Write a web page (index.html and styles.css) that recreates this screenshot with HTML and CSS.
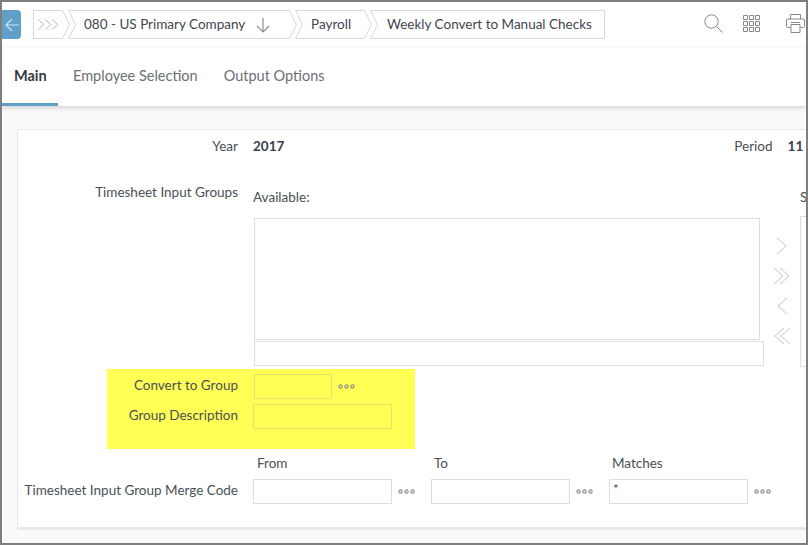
FILE: index.html
```html
<!DOCTYPE html>
<html lang="en">
<head>
  <meta charset="UTF-8">
  <title>Weekly Convert to Manual Checks</title>
  <link rel="stylesheet" href="styles.css">
</head>
<body>
  <svg class="defs" width="0" height="0">
    <symbol id="notch" viewBox="0 0 8 29"><path d="M8 .5H.7L7.500 14.500L.7 28.500H8"/></symbol>
    <symbol id="tip" viewBox="0 0 9 29"><path d="M0 .5H1.500L8.400 14.500L1.500 28.500H0"/></symbol>
    <symbol id="dots" viewBox="0 0 17 5">
      <circle cx="2.500" cy="2.500" r="1.600"/><circle cx="8.500" cy="2.500" r="1.600"/><circle cx="14.500" cy="2.500" r="1.600"/>
    </symbol>
  </svg>

  <div class="frame">
    <header class="topbar">
      <button class="back">
        <svg width="16" height="16" viewBox="0 0 16 16"><path d="M15 8H2M8 2L2 8l6 6"/></svg>
      </button>
      <nav class="crumbs">
        <div class="crumb crumb-first">
          <span class="crumb-body">
            <svg width="20" height="11" viewBox="0 0 20 11"><path d="M.5.5l5 5-5 5M7.500.5l5 5-5 5M14.500.5l5 5-5 5"/></svg>
          </span>
          <svg class="tip"><use href="#tip"/></svg>
        </div>
        <div class="crumb">
          <svg class="notch"><use href="#notch"/></svg>
          <span class="crumb-body crumb-company"><span>080 - US Primary Company</span><svg class="down" width="14" height="16" viewBox="0 0 14 16"><path d="M7 1v14M1 9l6 6 6-6"/></svg></span>
          <svg class="tip"><use href="#tip"/></svg>
        </div>
        <div class="crumb">
          <svg class="notch"><use href="#notch"/></svg>
          <span class="crumb-body crumb-payroll">Payroll</span>
          <svg class="tip"><use href="#tip"/></svg>
        </div>
        <div class="crumb crumb-last">
          <svg class="notch"><use href="#notch"/></svg>
          <span class="crumb-body crumb-title">Weekly Convert to Manual Checks</span>
        </div>
      </nav>
      <div class="tools">
        <svg class="tool-search" width="19" height="19" viewBox="0 0 19 19"><circle cx="7.500" cy="7.500" r="6.700"/><path d="M12.500 12.500l6 6"/></svg>
        <svg class="tool-grid" width="17" height="17" viewBox="0 0 17 17">
          <path d="M.5.5h4v4h-4zM6.500.5h4v4h-4zM12.500.5h4v4h-4zM.5 6.500h4v4h-4zM6.500 6.500h4v4h-4zM12.500 6.500h4v4h-4zM.5 12.500h4v4h-4zM6.500 12.500h4v4h-4zM12.500 12.500h4v4h-4z"/>
        </svg>
        <svg class="tool-print" width="19" height="19" viewBox="0 0 19 19"><path d="M4.500 5V.5h10V5M4.500 13.500h-3a1 1 0 0 1-1-1V6a1 1 0 0 1 1-1h16a1 1 0 0 1 1 1v6.500a1 1 0 0 1-1 1h-3M5 8.500h9M5 10.500h9V18.500H5z"/></svg>
      </div>
    </header>

    <div class="tabs">
      <a class="tab tab-active">Main</a>
      <a class="tab">Employee Selection</a>
      <a class="tab">Output Options</a>
    </div>

    <main class="content">
      <section class="panel">
        <div class="row row-year">
          <label class="label">Year</label>
          <strong class="value">2017</strong>
          <label class="period-label">Period</label>
          <strong class="value">11</strong>
        </div>

        <div class="row row-groups">
          <label class="label">Timesheet Input Groups</label>
          <div class="picker">
            <div class="picker-head">
              <span>Available:</span>
            </div>
            <div class="picker-body">
              <div class="picker-left">
                <div class="listbox"></div>
                <input class="input input-filter" type="text">
              </div>
              <div class="movers">
                <svg width="12" height="18" viewBox="0 0 12 18"><path d="M1 1l9 8-9 8"/></svg>
                <svg width="18" height="18" viewBox="0 0 18 18"><path d="M1 1l9 8-9 8M7 1l9 8-9 8"/></svg>
                <svg width="12" height="18" viewBox="0 0 12 18"><path d="M11 1L2 9l9 8"/></svg>
                <svg width="18" height="18" viewBox="0 0 18 18"><path d="M11 1L2 9l9 8M17 1L8 9l9 8"/></svg>
              </div>
              <div class="selected-col">
                <span class="selected-head">S</span>
                <div class="listbox listbox-selected"></div>
              </div>
            </div>
          </div>
        </div>

        <div class="highlight">
          <div class="row row-convert">
            <label class="label label-short">Convert to Group</label>
            <input class="input input-small" type="text">
            <svg class="dots"><use href="#dots"/></svg>
          </div>
          <div class="row row-desc">
            <label class="label label-short">Group Description</label>
            <input class="input" type="text">
          </div>
        </div>

        <div class="range-head">
          <span class="col-from">From</span>
          <span class="col-to">To</span>
          <span>Matches</span>
        </div>
        <div class="row row-merge">
          <label class="label">Timesheet Input Group Merge Code</label>
          <input class="input" type="text">
          <svg class="dots"><use href="#dots"/></svg>
          <input class="input" type="text">
          <svg class="dots"><use href="#dots"/></svg>
          <input class="input input-star" type="text" value="*">
          <svg class="dots"><use href="#dots"/></svg>
        </div>
      </section>
    </main>
  </div>
</body>
</html>
```

FILE: styles.css
```css
* {
  box-sizing: border-box;
}

html, body {
  margin: 0;
  height: 100%;
}

body {
  font-family: "Lato", "Open Sans", sans-serif;
  font-size: 13.5px;
  color: #4a4f55;
  overflow: hidden;
}

.defs {
  position: absolute;
}

.frame {
  width: 808px;
  height: 545px;
  border: 2px solid #7f7f7f;
  background: #fafafa;
  overflow: hidden;
  display: flex;
  flex-direction: column;
}

/* top bar */
.topbar {
  height: 46px;
  padding-top: 8px;
  background: #fff;
  display: flex;
  align-items: flex-start;
  flex: none;
}

.back {
  width: 19px;
  height: 29px;
  padding: 0;
  border: 0;
  border-radius: 0 4px 4px 0;
  background: #609fc8;
  display: flex;
  align-items: center;
  justify-content: center;
}

.back svg {
  fill: none;
  stroke: #cfe3f0;
  stroke-width: 1.2;
}

.crumbs {
  display: flex;
  margin-left: 12px;
  color: #3f4650;
}

.crumb {
  display: flex;
  height: 29px;
  margin-right: -2px;
}

.crumb > svg {
  height: 29px;
  fill: none;
  stroke: #d8d8d8;
  flex: none;
}

.notch {
  width: 8px;
}

.tip {
  width: 9px;
}

.crumb-body {
  display: flex;
  align-items: center;
  height: 29px;
  padding-bottom: 2px;
  border-top: 1px solid #d8d8d8;
  border-bottom: 1px solid #d8d8d8;
  white-space: nowrap;
}

.crumb-first .crumb-body {
  width: 28px;
  padding-left: 4px;
  padding-bottom: 0;
  border-left: 1px solid #d8d8d8;
}

.crumb-first .crumb-body svg {
  fill: none;
  stroke: #d0a0ea;
  flex: none;
}

.crumb-company {
  width: 212px;
  padding-left: 8px;
}

.down {
  margin-left: 11px;
  margin-top: 3px;
  fill: none;
  stroke: #8c8c8c;
  stroke-width: 1.2;
  flex: none;
}

.crumb-payroll {
  width: 60px;
  padding-left: 8px;
}

.crumb-title {
  width: 227px;
  padding-left: 9px;
  border-right: 1px solid #d8d8d8;
}

.tools {
  display: flex;
  align-items: flex-start;
  margin-left: 101px;
  padding-top: 4px;
}

.tools svg {
  fill: none;
  stroke: #888;
  flex: none;
}

.tool-grid {
  margin-left: 20px;
  margin-top: 1px;
}

.tool-print {
  margin-left: 26px;
}

/* tabs */
.tabs {
  height: 58px;
  background: #fff;
  display: flex;
  align-items: stretch;
  flex: none;
  position: relative;
  box-shadow: 0 2px 5px rgba(0, 0, 0, 0.16);
  font-size: 14.5px;
  color: #6b7076;
}

.tab {
  padding: 19px 13px 0;
  border-bottom: 3px solid transparent;
  white-space: nowrap;
}

.tab-active {
  width: 56px;
  margin-right: 2px;
  padding: 19px 0 0 12px;
  border-bottom-color: #609fc8;
  color: #333a42;
  font-weight: 700;
}

/* form panel */
.content {
  flex: 1;
  padding: 23px 0 0 15px;
  min-height: 0;
}

.panel {
  width: 800px;
  height: 401px;
  background: #fff;
  border-top: 1px solid #e8e8e8;
  border-left: 1px solid #e8e8e8;
  border-bottom: 3px solid #e8e8e8;
}

.row {
  display: flex;
  align-items: flex-start;
}

.label {
  width: 220px;
  flex: none;
  margin-right: 15px;
  text-align: right;
  white-space: nowrap;
}

.row-year {
  padding-top: 7px;
  line-height: 18px;
}

.value {
  color: #3a4048;
  font-weight: 700;
}

.period-label {
  margin-left: 450px;
  margin-right: 15px;
}

.row-groups {
  margin-top: 28px;
  line-height: 18px;
}

.picker {
  width: 600px;
  flex: none;
}

.picker-head {
  height: 35px;
  padding-top: 5px;
}

.picker-body {
  display: flex;
  align-items: flex-start;
  padding-left: 1px;
}

.picker-left {
  width: 510px;
  flex: none;
}

.listbox {
  width: 506px;
  height: 122px;
  border: 1px solid #dedede;
  background: #fff;
}

.selected-col {
  width: 60px;
  flex: none;
  margin-top: -30px;
}

.selected-head {
  display: block;
  height: 28px;
  white-space: nowrap;
}

.listbox-selected {
  width: 60px;
  height: 151px;
}

.input {
  display: block;
  width: 139px;
  height: 25px;
  padding: 0 3px 6px;
  border: 1px solid #dedede;
  border-radius: 0;
  background: transparent;
  font: inherit;
  color: inherit;
  flex: none;
}

.input-filter {
  width: 510px;
  margin-top: 1px;
}

.movers {
  width: 36px;
  flex: none;
  display: flex;
  flex-direction: column;
  align-items: center;
  gap: 12px;
  padding-top: 19px;
}

.movers svg {
  fill: none;
  stroke: #c4c4c4;
  flex: none;
}

/* yellow marker over the two group fields */
.highlight {
  width: 308px;
  height: 80px;
  margin: 2px 0 0 89px;
  padding-top: 5px;
  background: #ffff55;
}

.highlight .input {
  border-color: #e3e36a;
}

.label-short {
  width: 131px;
  line-height: 20px;
  padding-top: 1px;
}

.row-desc {
  margin-top: 5px;
}

.input-small {
  width: 78px;
  margin-left: 1px;
}

.dots {
  width: 17px;
  height: 5px;
  margin: 10px 0 0 6px;
  fill: none;
  stroke: #8c8c8c;
  stroke-width: 1.2;
  flex: none;
}

.range-head {
  display: flex;
  height: 30px;
  padding: 5px 0 0 239px;
  line-height: 18px;
}

.col-from {
  width: 177px;
}

.col-to {
  width: 178px;
}

.row-merge .label {
  padding-top: 3px;
}

.row-merge .dots {
  margin-right: 16px;
}
```
